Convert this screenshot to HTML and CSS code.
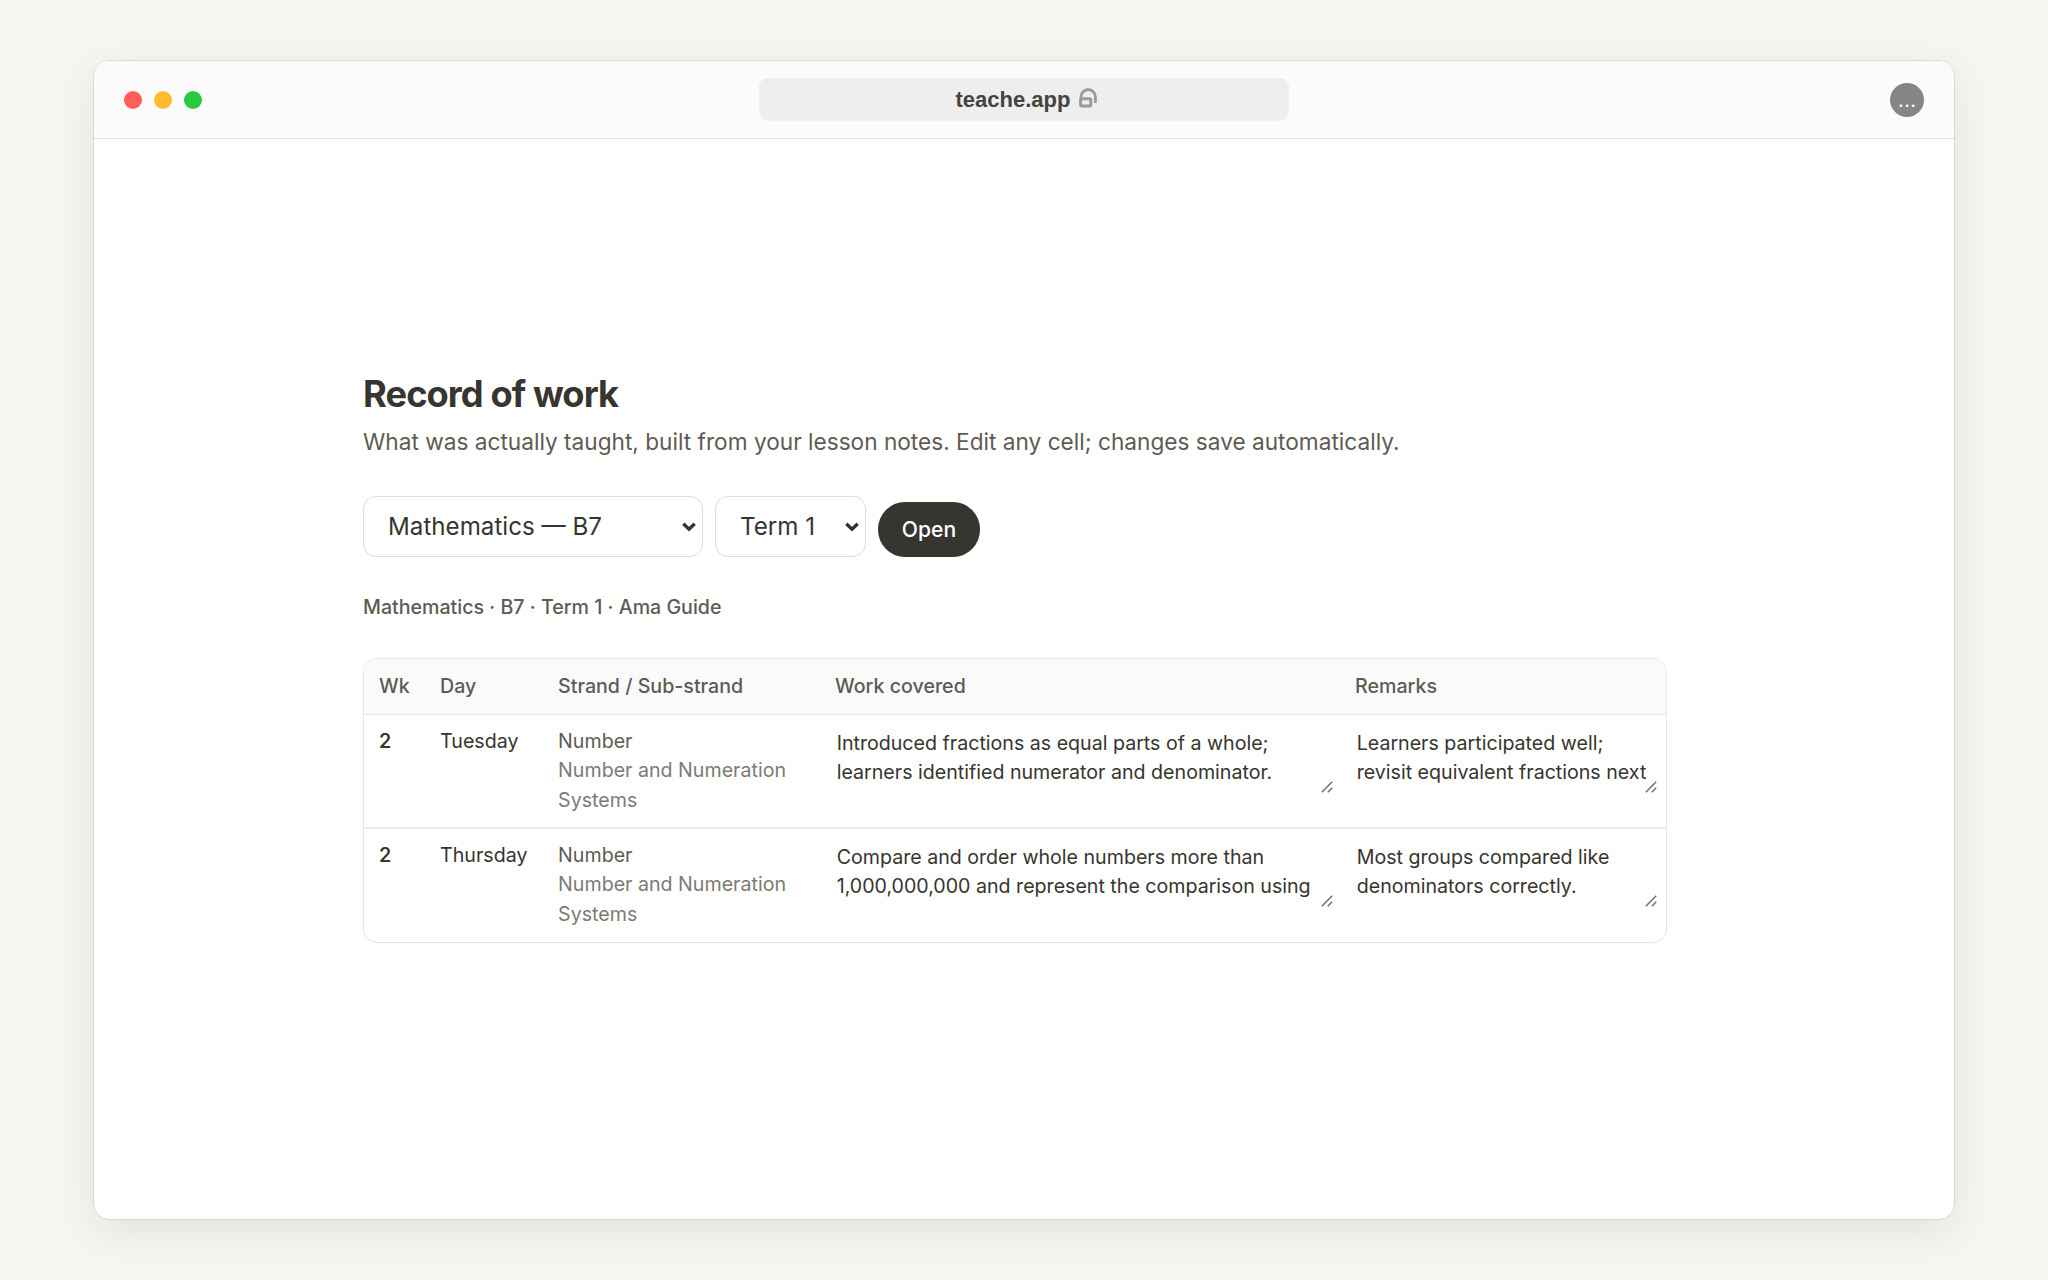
FILE: index.html
```html
<!DOCTYPE html>
<html lang="en">
<head>
    <meta charset="UTF-8">
    <meta name="viewport" content="width=device-width, initial-scale=1.0">
    <title>Record of work</title>
    <link rel="stylesheet" href="styles.css">
</head>
<body>
    <svg width="0" height="0" class="sprite">
        <symbol id="grip" viewBox="0 0 12 12">
            <path d="M.8 11.2 11.2.8M6.8 11.2l4.4-4.4" stroke="#6f6f6f" stroke-width="1.5"/>
        </symbol>
        <symbol id="chevron" viewBox="0 0 14 10">
            <path d="M1.3 1.7 7 7.3l5.7-5.6" fill="none" stroke="#37352f" stroke-width="3.3"/>
        </symbol>
    </svg>

    <div class="window">
        <div class="toolbar">
            <div class="dots">
                <span class="dot red"></span>
                <span class="dot yellow"></span>
                <span class="dot green"></span>
            </div>
            <div class="address">
                <span>teache.app</span>
                <svg class="lock" width="18" height="20" viewBox="0 0 18 20" fill="none" stroke="#9b9a94">
                    <rect x="1.6" y="10.8" width="10.2" height="7.2" rx="1" stroke-width="3"/>
                    <path d="M2 12V8.5a7.2 6.8 0 0 1 14.4 0V15" stroke-width="2.8"/>
                </svg>
            </div>
            <div class="menu">...</div>
        </div>

        <main class="page">
            <h1>Record of work</h1>
            <p class="lead">What was actually taught, built from your lesson notes. Edit any cell; changes save automatically.</p>

            <div class="filters">
                <div class="field">
                    <select class="select subject">
                        <option>Mathematics — B7</option>
                    </select>
                    <svg class="chevron"><use href="#chevron"/></svg>
                </div>
                <div class="field">
                    <select class="select term">
                        <option>Term 1</option>
                    </select>
                    <svg class="chevron"><use href="#chevron"/></svg>
                </div>
                <button class="open-btn">Open</button>
            </div>

            <p class="meta">Mathematics · B7 · Term 1 · Ama Guide</p>

            <div class="table-wrap">
                <table class="record">
                    <colgroup>
                        <col class="col-wk">
                        <col class="col-day">
                        <col class="col-strand">
                        <col class="col-work">
                        <col class="col-remarks">
                    </colgroup>
                    <thead>
                        <tr>
                            <th>Wk</th>
                            <th>Day</th>
                            <th>Strand / Sub-strand</th>
                            <th>Work covered</th>
                            <th>Remarks</th>
                        </tr>
                    </thead>
                    <tbody>
                        <tr>
                            <td class="week">2</td>
                            <td>Tuesday</td>
                            <td class="strand">Number<div class="sub">Number and Numeration Systems</div></td>
                            <td class="edit">
                                <div class="field">
                                    <textarea rows="2">Introduced fractions as equal parts of a whole; learners identified numerator and denominator.</textarea>
                                    <svg class="grip"><use href="#grip"/></svg>
                                </div>
                            </td>
                            <td class="edit">
                                <div class="field">
                                    <textarea rows="2">Learners participated well; revisit equivalent fractions next</textarea>
                                    <svg class="grip"><use href="#grip"/></svg>
                                </div>
                            </td>
                        </tr>
                        <tr>
                            <td class="week">2</td>
                            <td>Thursday</td>
                            <td class="strand">Number<div class="sub">Number and Numeration Systems</div></td>
                            <td class="edit">
                                <div class="field">
                                    <textarea rows="2">Compare and order whole numbers more than 1,000,000,000 and represent the comparison using</textarea>
                                    <svg class="grip"><use href="#grip"/></svg>
                                </div>
                            </td>
                            <td class="edit">
                                <div class="field">
                                    <textarea rows="2">Most groups compared like denominators correctly.</textarea>
                                    <svg class="grip"><use href="#grip"/></svg>
                                </div>
                            </td>
                        </tr>
                    </tbody>
                </table>
            </div>
        </main>
    </div>
</body>
</html>
```
FILE: styles.css
```css
* {
    margin: 0;
    padding: 0;
    box-sizing: border-box;
}

body {
    font-family: Inter, sans-serif;
    background: #f6f5f1;
    color: #37352f;
    height: 100vh;
    padding: 60px 93px;
}

.sprite {
    position: absolute;
}

.window {
    width: 1862px;
    height: 1160px;
    background: #fff;
    border: 1px solid #d9d9d6;
    border-radius: 16px;
    box-shadow: 0 12px 40px rgba(0, 0, 0, 0.08);
    overflow: hidden;
}

/* Browser bar */
.toolbar {
    height: 78px;
    padding: 0 30px;
    display: grid;
    grid-template-columns: 1fr 530px 1fr;
    align-items: center;
    background: #fbfbfb;
    border-bottom: 1px solid #dedede;
}

.dots {
    display: flex;
    gap: 12px;
}

.dot {
    width: 18px;
    height: 18px;
    border-radius: 50%;
}

.red {
    background: #ff5f57;
}

.yellow {
    background: #febc2e;
}

.green {
    background: #28c840;
}

.address {
    height: 43px;
    padding-left: 5px;
    display: flex;
    align-items: center;
    justify-content: center;
    gap: 9px;
    background: #eeeeee;
    border-radius: 9px;
    color: #444441;
    font: bold 22px "Liberation Sans", sans-serif;
}

.lock {
    margin-top: -4px;
}

.menu {
    width: 34px;
    height: 34px;
    justify-self: end;
    border-radius: 50%;
    background: #868686;
    color: #fff;
    font: 22px/34px "Liberation Sans", sans-serif;
    text-align: center;
}

/* Record page */
.page {
    width: 1304px;
    margin: 231px 0 0 269px;
}

h1 {
    font-size: 36.24px;
    line-height: 48px;
    font-weight: 700;
    letter-spacing: -0.025em;
}

.lead {
    margin-top: 7px;
    font-size: 22.65px;
    line-height: 34px;
    color: #5f5b53;
}

.field {
    position: relative;
}

.filters {
    display: flex;
    align-items: flex-end;
    gap: 12.5px;
    margin-top: 37px;
}

.select {
    display: block;
    height: 61px;
    padding: 0 24px;
    border: 1px solid #dcdcda;
    border-radius: 13px;
    background: #fff;
    color: #37352f;
    font: 24.16px Inter, sans-serif;
    appearance: none;
}

.chevron {
    position: absolute;
    right: 7px;
    top: 26px;
    width: 14px;
    height: 10px;
    pointer-events: none;
}

.subject {
    width: 339.5px;
}

.term {
    width: 150.5px;
}

.open-btn {
    width: 102px;
    height: 55px;
    border: none;
    border-radius: 27px;
    background: #37352f;
    color: #fff;
    font: 500 21.1px Inter, sans-serif;
}

.meta {
    margin-top: 35px;
    font-size: 19.63px;
    font-weight: 500;
    line-height: 30px;
    color: #5f5b53;
}

.table-wrap {
    margin-top: 36px;
    border: 1px solid #e6e6e5;
    border-radius: 14px;
    overflow: hidden;
}

.record {
    width: 100%;
    table-layout: fixed;
    border-collapse: separate;
    border-spacing: 0;
    font-size: 19.63px;
    line-height: 29.44px;
}

.col-wk {
    width: 61px;
}

.col-day {
    width: 118px;
}

.col-strand {
    width: 277px;
}

.col-work {
    width: 520px;
}

th {
    height: 56px;
    padding: 0 15.1px;
    background: #fafafa;
    border-bottom: 1px solid #e6e6e5;
    color: #5f5b53;
    font-weight: 500;
    text-align: left;
}

td {
    height: 114px;
    padding: 12px 15.1px 0;
    border-bottom: 2px solid #ededec;
    vertical-align: top;
}

tr:last-child td {
    height: 113px;
    border-bottom: none;
}

.week {
    font-weight: 600;
}

.strand {
    color: #5f5b53;
}

.sub {
    color: #7d7a75;
}

.edit {
    padding: 6px 7.5px 0;
}

.edit:last-child {
    padding-right: 8.7px;
}

textarea {
    display: block;
    width: 100%;
    height: 74px;
    padding: 7px 6px 7px 8.2px;
    border: 1px solid transparent;
    background: transparent;
    color: #37352f;
    font: inherit;
    overflow: hidden;
    resize: none;
}

.grip {
    position: absolute;
    right: 0;
    bottom: 2px;
    width: 12px;
    height: 12px;
    pointer-events: none;
}
```
